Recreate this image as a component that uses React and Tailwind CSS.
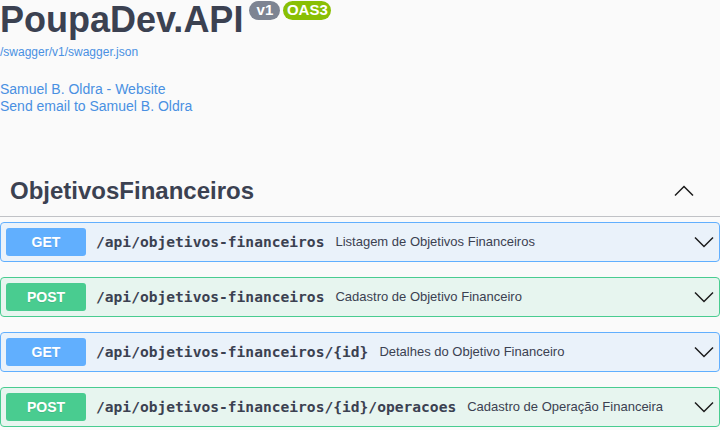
import React from 'react';

const ops = [
  { method: 'GET', path: '/api/objetivos-financeiros', desc: 'Listagem de Objetivos Financeiros' },
  { method: 'POST', path: '/api/objetivos-financeiros', desc: 'Cadastro de Objetivo Financeiro' },
  { method: 'GET', path: '/api/objetivos-financeiros/{id}', desc: 'Detalhes do Objetivo Financeiro' },
  { method: 'POST', path: '/api/objetivos-financeiros/{id}/operacoes', desc: 'Cadastro de Operação Financeira' },
];

const styles = {
  GET: {
    block: 'border-[#61affe] bg-[#61affe]/10',
    badge: 'bg-[#61affe]',
  },
  POST: {
    block: 'border-[#49cc90] bg-[#49cc90]/10',
    badge: 'bg-[#49cc90]',
  },
};

const Chevron = ({ up }) => (
  <svg width="20" height="20" viewBox="0 0 20 20" className="shrink-0">
    <polyline
      points={up ? '1,14.5 10,5.5 19,14.5' : '1,5.5 10,14.5 19,5.5'}
      fill="none"
      stroke="#1b1b1b"
      strokeWidth="1.5"
    />
  </svg>
);

const OpBlock = ({ method, path, desc }) => (
  <div className={`flex items-center h-[40px] px-[5px] border rounded-[4px] ${styles[method].block}`}>
    <span
      className={`w-[80px] h-[28px] flex items-center justify-center rounded-[3px] text-white text-[14px] font-bold [text-shadow:0_1px_0_rgba(0,0,0,0.1)] ${styles[method].badge}`}
    >
      {method}
    </span>
    <span className="ml-[10px] text-[14.6px] font-bold text-[#3b4151] font-['DejaVu_Sans_Mono',monospace]">
      {path}
    </span>
    <span className="ml-[11px] text-[13px] text-[#3b4151] flex-1">{desc}</span>
    <Chevron />
  </div>
);

export default function App() {
  return (
    <div className="w-[720px] h-[430px] overflow-hidden bg-[#fafafa] font-['Liberation_Sans',Arial,sans-serif]">
      {/* info */}
      <div className="flex items-start">
        <h2 className="text-[36px] leading-[40px] font-bold text-[#3b4151]">PoupaDev.API</h2>
        <div className="flex gap-[3px] ml-[6px] mt-[1px]">
          <span className="w-[31px] h-[19px] rounded-full bg-[#7d8492] text-white text-[15px] font-bold flex items-center justify-center">
            v1
          </span>
          <span className="w-[48px] h-[19px] rounded-full bg-[#89bf04] text-white text-[15px] font-bold flex items-center justify-center">
            OAS3
          </span>
        </div>
      </div>
      <div className="mt-[5px] text-[12px] leading-[14px] text-[#4990e2]">/swagger/v1/swagger.json</div>
      <div className="mt-[22px] text-[14px] leading-[17px] text-[#4990e2]">
        <div>Samuel B. Oldra - Website</div>
        <div>Send email to Samuel B. Oldra</div>
      </div>

      {/* tag section */}
      <div className="mt-[62px] flex items-center justify-between border-b border-[#3b4151]/30 pl-[10px] pr-[26px] pb-[11px]">
        <h3 className="text-[24px] leading-[28px] font-bold text-[#3b4151]">ObjetivosFinanceiros</h3>
        <Chevron up />
      </div>

      <div className="mt-[5px] flex flex-col gap-[15px]">
        {ops.map((op, i) => (
          <OpBlock key={i} {...op} />
        ))}
      </div>
    </div>
  );
}
